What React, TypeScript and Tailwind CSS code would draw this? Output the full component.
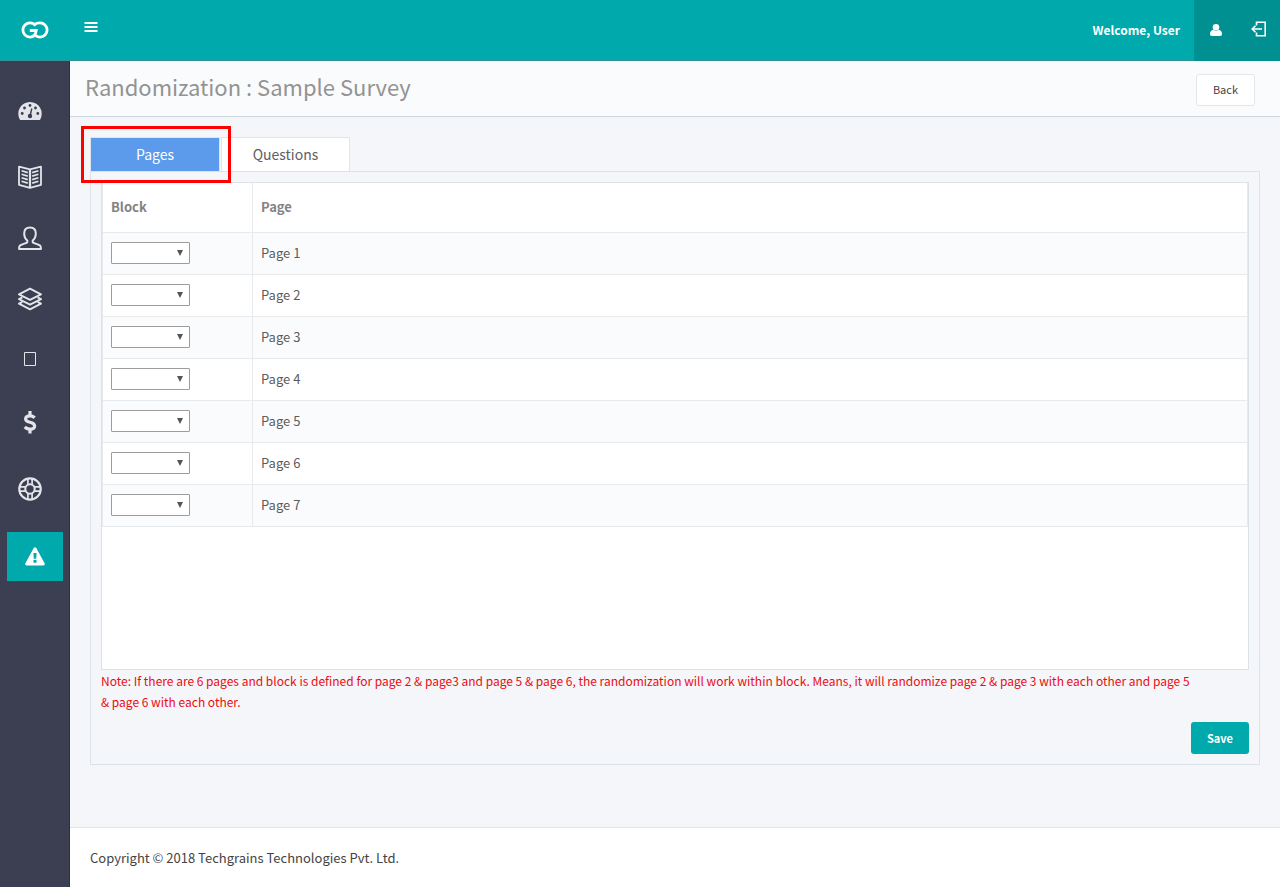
import React from 'react';

interface IconProps {
  className?: string;
}

interface NavItem {
  label: string;
  icon: React.FC<IconProps>;
  height: string;
}

const pages = ['Page 1', 'Page 2', 'Page 3', 'Page 4', 'Page 5', 'Page 6', 'Page 7'];
const blocks = [1, 2, 3, 4, 5, 6, 7];

const Logo: React.FC<IconProps> = ({ className }) => (
  <svg viewBox="0 0 28 18" className={className} fill="none" stroke="currentColor" strokeWidth="2.8">
    <path d="M14.6 4.6C13.2 2.8 11.4 1.9 9 1.9a7.1 7.1 0 1 0 0 14.2c3.5 0 5.7-2.3 6.2-6.6H8.8" />
    <path d="M13.3 3.7C14.7 2.5 16.6 1.9 19 1.9a7.1 7.1 0 1 1 0 14.2c-2 0-3.8-.7-5.2-2.2" />
  </svg>
);

const GaugeIcon: React.FC<IconProps> = ({ className }) => (
  <svg viewBox="0 0 24 24" className={className} fill="none">
    <path d="M1.8 20.5A11.7 11.7 0 1 1 22.2 20.5Q21.9 21 21.2 21H2.8Q2.1 21 1.8 20.5Z" fill="currentColor" />
    <g fill="#3c3f51">
      <circle cx="4.2" cy="14.5" r="1.4" />
      <circle cx="6.5" cy="9" r="1.4" />
      <circle cx="12" cy="6.5" r="1.4" />
      <circle cx="17.5" cy="9" r="1.4" />
      <circle cx="19.8" cy="14.5" r="1.4" />
      <circle cx="12" cy="17" r="2.2" />
    </g>
    <path d="M12 17L13.7 10" stroke="#3c3f51" strokeWidth="1.4" strokeLinecap="round" />
  </svg>
);

const BookIcon: React.FC<IconProps> = ({ className }) => (
  <svg viewBox="0 0 24 24" className={className} fill="none" stroke="currentColor" strokeWidth="1.8" strokeLinejoin="round">
    <path d="M1 1.6L12 4.3L23 1.6V19.8L12 22.8L1 19.8Z" />
    <path d="M12 4.2V22.8" strokeWidth="2.2" />
    <path d="M3.6 5.8L9.8 7.6M3.6 9.3L9.8 11.1M3.6 12.8L9.8 14.6M3.6 16.3L9.8 18.1M20.4 5.8L14.2 7.6M20.4 9.3L14.2 11.1M20.4 12.8L14.2 14.6M20.4 16.3L14.2 18.1" strokeWidth="1.7" />
  </svg>
);

const PersonIcon: React.FC<IconProps> = ({ className }) => (
  <svg viewBox="0 0 24 24" className={className} fill="none" stroke="currentColor" strokeWidth="2" strokeLinejoin="round">
    <path d="M12 1.4C8.3 1.4 6.2 3.6 6.2 7.2C6.2 10.4 7.6 13.2 9.3 14.5V16.3C6.8 17.7 3.3 18.3 1.9 19.6C1 20.3 1.1 21.5 1.1 22.9H22.9C22.9 21.5 23 20.3 22.1 19.6C20.7 18.3 17.2 17.7 14.7 16.3V14.5C16.4 13.2 17.8 10.4 17.8 7.2C17.8 3.6 15.7 1.4 12 1.4Z" />
  </svg>
);

const LayersIcon: React.FC<IconProps> = ({ className }) => (
  <svg viewBox="0 0 24 24" className={className} fill="none" stroke="currentColor" strokeWidth="1.9" strokeLinejoin="round">
    <path d="M12 1.7L23 7.3L12 12.9L1 7.3Z" />
    <path d="M4.4 10.4L1 12.1L12 17.7L23 12.1L19.6 10.4" />
    <path d="M4.4 14.9L1 16.7L12 22.3L23 16.7L19.6 14.9" />
  </svg>
);

const BoxIcon: React.FC<IconProps> = ({ className }) => (
  <svg viewBox="0 0 24 24" className={className} fill="none" stroke="currentColor">
    <path d="M6.5 4.5H17.5V17.5H6.5Z" />
  </svg>
);

const DollarIcon: React.FC<IconProps> = ({ className }) => (
  <svg viewBox="0 0 24 24" className={className} fill="none" stroke="currentColor" strokeWidth="3.2">
    <path d="M16.7 6.7C15.4 5.5 13.9 4.8 12 4.8C9.4 4.8 7.6 6 7.6 7.9C7.6 10.1 9.7 10.7 12 11.3C14.8 12 16.6 12.8 16.6 15C16.6 17 14.7 18.2 12 18.2C9.8 18.2 8.2 17.4 6.7 16" />
    <path d="M12 0V4.4M12 18.4V22.6" />
  </svg>
);

const RingIcon: React.FC<IconProps> = ({ className }) => (
  <svg viewBox="0 0 24 24" className={className} fill="none" stroke="currentColor">
    <circle cx="12" cy="12" r="10.7" strokeWidth="2.2" />
    <circle cx="12" cy="12" r="4.7" strokeWidth="2.1" />
    <path d="M9.9 1.5V7.5M14.1 1.5V7.5M9.9 16.5V22.5M14.1 16.5V22.5M1.5 9.9H7.5M1.5 14.1H7.5M16.5 9.9H22.5M16.5 14.1H22.5" strokeWidth="1.7" />
  </svg>
);

const WarningIcon: React.FC<IconProps> = ({ className }) => (
  <svg viewBox="0 0 20 20" className={className}>
    <path d="M8.6 1.2Q10 -.5 11.4 1.2L19.6 16.2Q20.3 18.2 18.3 18.5H1.7Q-.3 18.2 .4 16.2Z" fill="currentColor" />
    <path d="M8.4 6H11.6L11.2 11.7H8.8ZM8.5 13H11.5V15.7H8.5Z" fill="#00a9ab" />
  </svg>
);

const UserIcon: React.FC<IconProps> = ({ className }) => (
  <svg viewBox="0 0 12 12" className={className} fill="currentColor">
    <circle cx="6" cy="3.3" r="3.3" />
    <path d="M3.3 5.8C1 6.2 0 7.8 0 10.2Q0 12 1.8 12H10.2Q12 12 12 10.2C12 7.8 11 6.2 8.7 5.8Q6 8 3.3 5.8Z" />
  </svg>
);

const ExitIcon: React.FC<IconProps> = ({ className }) => (
  <svg viewBox="0 0 16 16" className={className} fill="none" stroke="currentColor" strokeWidth="1.6">
    <path d="M5.5 4.5V1.2H14.2V14.7H5.5V11.5" />
    <path d="M11 8H1.2M4.5 4.7L1.2 8L4.5 11.3" />
  </svg>
);

const navItems: NavItem[] = [
  { label: 'Dashboard', icon: GaugeIcon, height: 'h-[70px]' },
  { label: 'Surveys', icon: BookIcon, height: 'h-[61px]' },
  { label: 'Contacts', icon: PersonIcon, height: 'h-[61px]' },
  { label: 'Library', icon: LayersIcon, height: 'h-[61px]' },
  { label: 'Templates', icon: BoxIcon, height: 'h-[61px]' },
  { label: 'Billing', icon: DollarIcon, height: 'h-[66px]' },
  { label: 'Support', icon: RingIcon, height: 'h-[66px]' },
];

const Header = () => (
  <header className="flex h-[61px] border-b border-[#2f9296] bg-[#00a9ab] text-white">
    <a href="#" aria-label="Home" className="flex w-[70px] shrink-0 items-center justify-center">
      <Logo className="h-[18px] w-[28px]" />
    </a>
    <button type="button" aria-label="Toggle menu" className="flex w-[42px] items-center justify-center pb-[6px]">
      <svg viewBox="0 0 14 12" className="h-3 w-[14px]" stroke="currentColor" strokeWidth="2">
        <path d="M.5 2H13.5M.5 6H13.5M.5 10H13.5" />
      </svg>
    </button>
    <div className="ml-auto flex items-center">
      <span className="pr-[14px] pb-[2px] text-[12px] font-bold">Welcome, User</span>
      <div className="flex h-[61px] bg-[#009091]">
        <a href="#" aria-label="Profile" className="flex w-[43px] items-center justify-center">
          <UserIcon className="h-[12px] w-[12px]" />
        </a>
        <a href="#" aria-label="Log out" className="flex w-[43px] items-center justify-center pb-[2px]">
          <ExitIcon className="h-4 w-4" />
        </a>
      </div>
    </div>
  </header>
);

const Sidebar = () => (
  <nav className="w-[70px] shrink-0 border-r border-[#2d303f] bg-[#3c3f51] pt-[15px] text-[#e4e5ea]">
    {
      navItems.map(({ label, icon: Icon, height }) => (
        <a key={label} href="#" aria-label={label} className={`flex w-[60px] items-center justify-center ${height}`}>
          <Icon className="h-6 w-6" />
        </a>
      ))
    }
    <a href="#" aria-label="Alerts" className="mx-[7px] mt-[10px] flex h-[49px] w-[56px] items-center justify-center bg-[#00a9ab] text-white">
      <WarningIcon className="h-5 w-5" />
    </a>
  </nav>
);

const BlockSelect: React.FC<{ page: string }> = ({ page }) => (
  <div className="relative w-[79px]">
    <select
      aria-label={`Block for ${page}`}
      defaultValue=""
      className="block h-[22px] w-full appearance-none rounded-[1px] border border-[#9c9c9c] bg-white px-1 text-[13px]"
    >
      <option value=""></option>
      {
        blocks.map((block) => (
          <option key={block} value={block}>{block}</option>
        ))
      }
    </select>
    <svg viewBox="0 0 6 6" className="pointer-events-none absolute top-2 right-[7px] h-[6px] w-[6px]">
      <path d="M0 0H6L3 6Z" fill="#555" />
    </svg>
  </div>
);

const PagesTable = () => (
  <div className="min-h-[488px] border border-[#dbe2e8] bg-white">
    <table className="w-full border-collapse border-x border-[#e7eaed] text-left">
      <thead>
        <tr className="h-[49px] border-b border-[#e7eaed] text-[#838383]">
          <th className="w-[150px] border-r border-[#e7eaed] px-2 pb-[2px] font-bold">Block</th>
          <th className="px-2 pb-[2px] font-bold">Page</th>
        </tr>
      </thead>
      <tbody>
        {
          pages.map((page) => (
            <tr key={page} className="h-[42px] border-b border-[#e7eaed] odd:bg-[#fafbfc]">
              <td className="border-r border-[#e7eaed] px-2">
                <BlockSelect page={page} />
              </td>
              <td className="px-2 pb-[2px]">{page}</td>
            </tr>
          ))
        }
      </tbody>
    </table>
  </div>
);

export default function App() {
  const [tab, setTab] = React.useState('Pages');

  const tabClass = (name: string) =>
    tab === name ? 'bg-[#5c9aeb] text-white' : 'bg-white text-[#606060]';

  return (
    <div className="flex min-h-screen flex-col bg-[#f4f6fa] font-['Noto_Sans_CJK_SC',sans-serif] text-[13px] leading-[21px] text-[#5c5c5c]">
      <Header />
      <div className="flex grow">
        <Sidebar />
        <div className="flex min-w-0 grow flex-col">
          <div className="flex h-[56px] items-center justify-between border-b border-[#cdd6de] bg-[#fafbfd] pt-[2px] pr-[25px] pl-[15px]">
            <h1 className="pb-[6px] text-[22px] text-[#939393]">Randomization : Sample Survey</h1>
            <button type="button" className="h-8 rounded-[3px] border border-[#e2e7eb] bg-white px-4 text-[11px] text-[#444]">Back</button>
          </div>
          <main className="grow p-5">
            <div role="tablist" className="relative flex w-fit gap-px">
              <button
                type="button"
                role="tab"
                aria-selected={tab === 'Pages'}
                onClick={() => setTab('Pages')}
                className={`h-[34px] w-[130px] border border-b-0 border-[#dfe5ea] text-[14px] ${tabClass('Pages')}`}
              >
                Pages
              </button>
              <button
                type="button"
                role="tab"
                aria-selected={tab === 'Questions'}
                onClick={() => setTab('Questions')}
                className={`h-[34px] w-[129px] border border-b-0 border-[#dfe5ea] text-[14px] ${tabClass('Questions')}`}
              >
                Questions
              </button>
              <div className="pointer-events-none absolute -top-[11px] -left-[9px] h-[57px] w-[150px] border-3 border-[#f00]"></div>
            </div>
            <div className="border border-[#dbe2e8] p-[10px]">
              <PagesTable />
              <p className="pr-14 text-[12px] text-[#ec0c10]">
                Note: If there are 6 pages and block is defined for page 2 &amp; page3 and page 5 &amp; page 6, the randomization will work within block. Means, it will randomize page 2 &amp; page 3 with each other and page 5 &amp; page 6 with each other.
              </p>
              <div className="mt-[10px] flex justify-end">
                <button type="button" className="h-8 rounded-[3px] bg-[#00a9ab] px-4 text-[11px] font-bold text-white">Save</button>
              </div>
            </div>
          </main>
          <footer className="flex h-[60px] items-center border-t border-[#e1e4e8] bg-white px-5 text-[#444]">
            Copyright © 2018 Techgrains Technologies Pvt. Ltd.
          </footer>
        </div>
      </div>
    </div>
  );
}
